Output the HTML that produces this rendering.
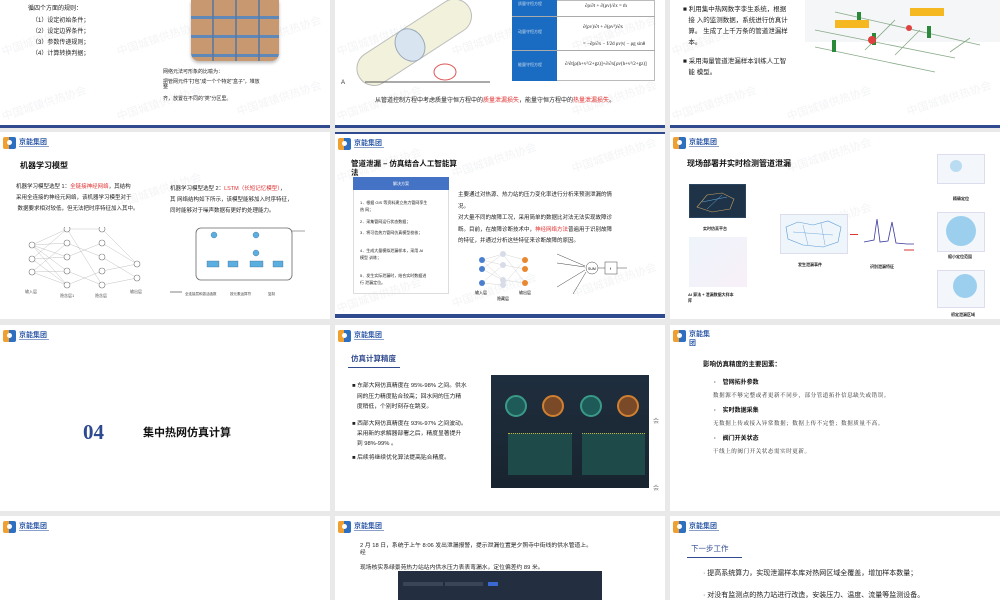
<!DOCTYPE html>
<html><head><meta charset="utf-8"><style>
*{margin:0;padding:0;box-sizing:border-box}
body{width:1000px;height:600px;background:#e9e9ea;position:relative;overflow:hidden;font-family:"Liberation Sans","Noto Sans CJK SC",sans-serif;color:#222}
.p{position:absolute;background:#fff;overflow:hidden}
.a{position:absolute;white-space:nowrap}
.bar{position:absolute;left:0;right:0;height:3px;background:#2f4a8f}
.t{font-size:6px;line-height:1}
.logo{position:absolute;width:46px;height:14px}
.logo .ic{position:absolute;left:0;top:0;width:13px;height:12px;background:linear-gradient(90deg,#f0a030 0 45%,#2e6fc0 45%);border-radius:2px}
.logo .ic:after{content:"";position:absolute;left:4px;top:3px;width:5px;height:5px;background:#fff;border-radius:50%}
.logo .n{position:absolute;left:16px;top:0;font-size:7px;color:#2e5aa8;font-weight:bold;white-space:nowrap}
.logo .s{position:absolute;left:16px;top:9px;width:30px;height:1px;background:#8aa0c8}
.wm{position:absolute;color:#f3f4f6;font-size:11px;transform:rotate(-18deg);white-space:nowrap}
.red{color:#e03030}
.h{font-weight:bold;color:#111}
.ul{border-bottom:1px solid #2f4a8f;color:#2f4a8f;font-weight:bold}
.dark{position:absolute;background:#1c2a3a}
</style></head><body>

<!-- ROW 1 -->
<div class="p" style="left:0;top:0;width:330px;height:128px">
 <div class="wm" style="left:0;top:30px">中国城镇供热协会</div><div class="wm" style="left:115px;top:30px">中国城镇供热协会</div><div class="wm" style="left:235px;top:25px">中国城镇供热协会</div>
 <div class="wm" style="left:0;top:95px">中国城镇供热协会</div><div class="wm" style="left:115px;top:95px">中国城镇供热协会</div><div class="wm" style="left:235px;top:90px">中国城镇供热协会</div>
 <div class="a t" style="left:28px;top:6px">循四个方面的规则：</div>
 <div class="a t" style="left:32px;top:18px">（1）设定初始条件；</div>
 <div class="a t" style="left:32px;top:29px">（2）设定边界条件；</div>
 <div class="a t" style="left:32px;top:40px">（3）参数传递规则；</div>
 <div class="a t" style="left:32px;top:51px">（4）计算转换判据；</div>
 <div class="a" style="left:191px;top:0;width:88px;height:61px;border-radius:0 0 8px 8px;background:repeating-linear-gradient(180deg,#c89870 0 16px,#5f87b8 16px 19px),#c89870;box-shadow:0 2px 3px #bbb"></div>
 <div class="a" style="left:191px;top:0;width:88px;height:61px;border-radius:0 0 8px 8px;background:repeating-linear-gradient(90deg,transparent 0 21px,rgba(90,120,160,.8) 21px 23px)"></div>
 <div class="a t" style="left:163px;top:70px;font-size:5px">网络元法可形象的比喻为：</div>
 <div class="a t" style="left:163px;top:80px;font-size:5px">把管网元件“打包”成一个个特定“盒子”，堆放<br>整</div>
 <div class="a t" style="left:163px;top:97px;font-size:5px">齐，放置在不同的“类”分区里。</div>
 <div class="bar" style="top:125px"></div>
</div>

<div class="p" style="left:335px;top:0;width:330px;height:128px">
 <div class="wm" style="left:0;top:30px">中国城镇供热协会</div><div class="wm" style="left:115px;top:30px">中国城镇供热协会</div><div class="wm" style="left:235px;top:25px">中国城镇供热协会</div><div class="wm" style="left:0;top:95px">中国城镇供热协会</div><div class="wm" style="left:235px;top:90px">中国城镇供热协会</div>
 <svg class="a" style="left:0;top:0" width="170" height="90">
  <g transform="rotate(-33 75 45)"><rect x="15" y="28" width="130" height="34" rx="17" fill="#f2f2dc" stroke="#bbb"/><ellipse cx="75" cy="45" rx="14" ry="17" fill="#d8e4f0" stroke="#9ab"/></g>
  <line x1="30" y1="82" x2="155" y2="82" stroke="#555" stroke-width="1"/>
  <ellipse cx="110" cy="72" rx="11" ry="8" fill="none" stroke="#d55"/>
  <text x="6" y="84" font-size="6" fill="#333">A</text>
 </svg>
 <div class="a" style="left:177px;top:0;width:143px;height:81px;border:1px solid #bbb"></div>
 <div class="a" style="left:177px;top:0;width:45px;height:81px;background:#1a6cc2"></div>
 <div class="a" style="left:177px;top:16px;width:143px;height:1px;background:#aaa"></div>
 <div class="a" style="left:177px;top:50px;width:143px;height:1px;background:#aaa"></div>
 <div class="a t" style="left:183px;top:2px;font-size:4px;color:#cde">质量守恒方程</div>
 <div class="a t" style="left:183px;top:30px;font-size:4px;color:#cde">动量守恒方程</div>
 <div class="a t" style="left:183px;top:63px;font-size:4px;color:#cde">能量守恒方程</div>
 <div class="a t" style="left:250px;top:4px;font-size:5px;font-family:'Liberation Serif',serif">∂ρ/∂t + ∂(ρv)/∂x = ṁ</div>
 <div class="a t" style="left:248px;top:25px;font-size:5px;font-family:'Liberation Serif',serif">∂(ρv)/∂t + ∂(ρv²)/∂x</div>
 <div class="a t" style="left:248px;top:42px;font-size:5px;font-family:'Liberation Serif',serif">= −∂p/∂x − f/2d ρv|v| − ρg sinθ</div>
 <div class="a t" style="left:230px;top:62px;font-size:5px;font-family:'Liberation Serif',serif">∂/∂t[ρ(h+v²/2+gz)]+∂/∂x[ρv(h+v²/2+gz)]</div>
 <div class="a t" style="left:40px;top:98px">从管道控制方程中考虑质量守恒方程中的<span class="red">质量泄漏损失</span>，能量守恒方程中的<span class="red">热量泄漏损失</span>。</div>
 <div class="bar" style="top:125px"></div>
</div>

<div class="p" style="left:670px;top:0;width:330px;height:128px">
 <div class="wm" style="left:0;top:30px">中国城镇供热协会</div><div class="wm" style="left:115px;top:95px">中国城镇供热协会</div><div class="wm" style="left:235px;top:90px">中国城镇供热协会</div><div class="wm" style="left:0;top:95px">中国城镇供热协会</div>
 <div class="a" style="left:13px;top:4px;font-size:6.5px;line-height:11px">■ 利用集中热网数字孪生系统，根据<br>&nbsp;&nbsp;&nbsp;接 入的监测数据，系统进行仿真计<br>&nbsp;&nbsp;&nbsp;算。 生成了上千万条的管道泄漏样<br>&nbsp;&nbsp;&nbsp;本。</div>
 <div class="a" style="left:13px;top:56px;font-size:6.5px;line-height:11px">■ 采用海量管道泄漏样本训练人工智<br>&nbsp;&nbsp;&nbsp;能 模型。</div>
 <svg class="a" style="left:135px;top:0" width="195" height="80">
  <rect x="0" y="0" width="195" height="42" fill="#f4f6f8"/>
  <g stroke="#8a8" stroke-width="0.8" fill="none"><line x1="30" y1="12" x2="175" y2="45"/><line x1="10" y1="30" x2="150" y2="58"/><line x1="10" y1="47" x2="130" y2="72"/><line x1="60" y1="50" x2="90" y2="20"/><line x1="90" y1="55" x2="115" y2="30"/><line x1="145" y1="52" x2="165" y2="38"/></g>
  <rect x="52" y="12" width="4" height="12" fill="#2a8a3a"/><rect x="27" y="40" width="4" height="12" fill="#2a8a3a"/><rect x="67" y="33" width="4" height="12" fill="#2a8a3a"/><rect x="122" y="26" width="4" height="12" fill="#2a8a3a"/>
  <circle cx="67" cy="40" r="4" fill="#e04040"/><circle cx="104" cy="28" r="3" fill="#e04040"/>
  <rect x="30" y="20" width="34" height="8" fill="#f5b820"/><rect x="105" y="8" width="34" height="8" fill="#f5b820"/>
 </svg>
 <div class="bar" style="top:125px"></div>
</div>

<!-- ROW 2 -->
<div class="p" style="left:0;top:132px;width:330px;height:187px">
 <div class="logo" style="left:3px;top:5px"><div class="ic"></div><div class="n">京能集团</div><div class="s"></div></div>
 <div class="wm" style="left:115px;top:50px">中国城镇供热协会</div>
 <div class="a h" style="left:20px;top:28px;font-size:8px">机器学习模型</div>
 <div class="a" style="left:16px;top:50px;font-size:5.5px;line-height:11px">机器学习模型选型 1：<span class="red">全链接神经网络</span>，其结构<br>采用全连接的神经元网络，该机器学习模型对于<br>&nbsp;数据要求相对较低，但无法把时序特征加入其中。</div>
 <div class="a" style="left:170px;top:52px;font-size:5.5px;line-height:11px">机器学习模型选型 2：<span class="red">LSTM（长短记忆模型）</span>，<br>其 网络结构如下所示，该模型能够加入时序特征，<br>同时能够对于噪声数据有更好的处理能力。</div>
 <svg class="a" style="left:25px;top:95px" width="125" height="75">
  <g stroke="#999" stroke-width="0.3">
   <path d="M7 18L42 2M7 18L42 16M7 18L42 30M7 18L42 44M7 18L42 58M7 32L42 2M7 32L42 30M7 32L42 58M7 45L42 16M7 45L42 44M7 45L42 58M42 2L77 2M42 16L77 30M42 30L77 16M42 44L77 58M42 58L77 44M42 2L77 58M77 2L112 37M77 16L112 37M77 30L112 51M77 44L112 37M77 58L112 51"/>
  </g>
  <g fill="#fff" stroke="#777" stroke-width="0.6"><circle cx="7" cy="18" r="3"/><circle cx="7" cy="32" r="3"/><circle cx="7" cy="45" r="3"/>
  <circle cx="42" cy="2" r="3"/><circle cx="42" cy="16" r="3"/><circle cx="42" cy="30" r="3"/><circle cx="42" cy="44" r="3"/><circle cx="42" cy="58" r="3"/>
  <circle cx="77" cy="2" r="3"/><circle cx="77" cy="16" r="3"/><circle cx="77" cy="30" r="3"/><circle cx="77" cy="44" r="3"/><circle cx="77" cy="58" r="3"/>
  <circle cx="112" cy="37" r="3"/><circle cx="112" cy="51" r="3"/></g>
  <text x="0" y="66" font-size="4" fill="#555">输入层</text><text x="35" y="70" font-size="4" fill="#555">隐含层1</text><text x="70" y="70" font-size="4" fill="#555">隐含层</text><text x="105" y="66" font-size="4" fill="#555">输出层</text>
 </svg>
 <svg class="a" style="left:170px;top:93px" width="140" height="75">
  <rect x="26" y="3" width="96" height="52" rx="5" fill="none" stroke="#666" stroke-width="0.8"/>
  <line x1="122" y1="6" x2="135" y2="6" stroke="#666" stroke-width="0.6"/>
  <g fill="#5aaee0" stroke="#357"><rect x="37" y="36" width="12" height="6" stroke-width="0.3"/><rect x="58" y="36" width="10" height="6" stroke-width="0.3"/><rect x="80" y="36" width="13" height="6" stroke-width="0.3"/><rect x="103" y="36" width="10" height="6" stroke-width="0.3"/><circle cx="44" cy="10" r="3" stroke-width="0.3"/><circle cx="86" cy="10" r="3" stroke-width="0.3"/><circle cx="86" cy="28" r="3" stroke-width="0.3"/></g>
  <line x1="0" y1="67" x2="12" y2="67" stroke="#333" stroke-width="0.6"/>
  <text x="15" y="70" font-size="3.5" fill="#444">全连接层和激活函数</text><text x="60" y="70" font-size="3.5" fill="#444">按元素运算符</text><text x="98" y="70" font-size="3.5" fill="#444">复制</text>
 </svg>
</div>

<div class="p" style="left:335px;top:132px;width:330px;height:187px">
 <div class="a" style="left:0;right:0;top:0;height:2px;background:#2f4a8f"></div>
 <div class="wm" style="left:0;top:25px">中国城镇供热协会</div><div class="wm" style="left:115px;top:20px">中国城镇供热协会</div><div class="wm" style="left:235px;top:15px">中国城镇供热协会</div><div class="wm" style="left:0;top:155px">中国城镇供热协会</div><div class="wm" style="left:115px;top:150px">中国城镇供热协会</div><div class="wm" style="left:235px;top:140px">中国城镇供热协会</div>
 <div class="logo" style="left:3px;top:6px"><div class="ic"></div><div class="n">京能集团</div><div class="s"></div></div>
 <div class="a h" style="left:16px;top:27px;font-size:7.5px;line-height:9px">管道泄漏 – 仿真结合人工智能算<br>法</div>
 <div class="a" style="left:18px;top:45px;width:96px;height:117px;border:1px solid #ddd"></div>
 <div class="a" style="left:18px;top:45px;width:96px;height:13px;background:#4472c4;color:#fff;font-size:4px;text-align:center;line-height:13px">解决方案</div>
 <div class="a" style="left:25px;top:67px;font-size:4px;line-height:7px">1．根据 GIS 等资料建立热力管网孪生<br>热 网；</div>
 <div class="a" style="left:25px;top:87px;font-size:4px">2．采集管网运行状态数据；</div>
 <div class="a" style="left:25px;top:98px;font-size:4px">3．将可信热力管网仿真模型校核；</div>
 <div class="a" style="left:25px;top:115px;font-size:4px;line-height:7px">4．生成大量模拟泄漏样本，采用 AI<br>模型 训练；</div>
 <div class="a" style="left:25px;top:140px;font-size:4px;line-height:7px">5．发生实际泄漏时，结合实时数据进<br>行 泄漏定位。</div>
 <div class="a" style="left:123px;top:58px;font-size:5.5px;line-height:11.5px">主要通过对热源、热力站的压力变化率进行分析来预测泄漏的情<br>况。<br>对大量不同的故障工况，采用简单的数据比对法无法实现故障诊<br>断。目前，在故障诊断技术中，<span class="red">神经网络方法</span>普遍用于识别故障<br>的特征，并通过分析这些特征来诊断故障的原因。</div>
 <svg class="a" style="left:140px;top:118px" width="70" height="52">
  <g stroke="#ccc" stroke-width="0.4"><path d="M7 10L28 4M7 10L28 15M7 10L28 30M7 19L28 4M7 19L28 30M7 33L28 15M7 33L28 35M28 4L50 10M28 15L50 19M28 30L50 33M28 35L50 10M28 4L50 33"/></g>
  <g fill="#4a7fd0"><circle cx="7" cy="10" r="3"/><circle cx="7" cy="19" r="3"/><circle cx="7" cy="33" r="3"/></g>
  <g fill="#d8dce8"><circle cx="28" cy="4" r="3"/><circle cx="28" cy="15" r="3"/><circle cx="28" cy="30" r="3"/><circle cx="28" cy="35" r="3"/></g>
  <g fill="#e88830"><circle cx="50" cy="10" r="3"/><circle cx="50" cy="19" r="3"/><circle cx="50" cy="33" r="3"/></g>
  <text x="0" y="44" font-size="4">输入层</text><text x="22" y="50" font-size="4">隐藏层</text><text x="44" y="44" font-size="4">输出层</text>
 </svg>
 <svg class="a" style="left:220px;top:118px" width="80" height="45">
  <g stroke="#444" stroke-width="0.5" fill="none"><line x1="2" y1="4" x2="30" y2="16"/><line x1="2" y1="13" x2="30" y2="17"/><line x1="2" y1="37" x2="30" y2="20"/><line x1="18" y1="44" x2="31" y2="22"/><circle cx="37" cy="18" r="6" fill="#fff"/><line x1="43" y1="18" x2="50" y2="18"/><rect x="50" y="12" width="12" height="12"/><line x1="62" y1="18" x2="72" y2="18"/></g>
  <text x="33" y="20" font-size="3.5">SUM</text><text x="55" y="20" font-size="4">f</text>
 </svg>
 <div class="bar" style="top:182px;height:4px"></div>
</div>

<div class="p" style="left:670px;top:132px;width:330px;height:187px">
 <div class="wm" style="left:115px;top:15px">中国城镇供热协会</div><div class="wm" style="left:115px;top:80px">中国城镇供热协会</div>
 <div class="logo" style="left:3px;top:5px"><div class="ic"></div><div class="n">京能集团</div><div class="s"></div></div>
 <div class="a h" style="left:17px;top:26px;font-size:8px">现场部署并实时检测管道泄漏</div>
 <div class="a" style="left:19px;top:52px;width:57px;height:34px;background:#1e3348;border:1px solid #2a4560"></div>
 <svg class="a" style="left:22px;top:55px" width="50" height="28"><path d="M5 20L15 8L30 6L42 12L38 22L20 25Z" fill="none" stroke="#c8a060" stroke-width="0.6"/><path d="M10 15L35 10M15 22L30 8" stroke="#6ad" stroke-width="0.5"/></svg>
 <div class="a" style="left:33px;top:94px;font-size:4px;font-weight:bold">实时仿真平台</div>
 <div class="a" style="left:19px;top:105px;width:58px;height:50px;background:linear-gradient(135deg,#eef4fb,#f8f0f8)"></div>
 <div class="a" style="left:18px;top:160px;font-size:4px;font-weight:bold;line-height:6px">AI 算法 + 泄漏数据大样本<br>库</div>
 <div class="a" style="left:110px;top:82px;width:68px;height:40px;background:#eef5fb;border:1px solid #dde"></div>
 <svg class="a" style="left:113px;top:85px" width="62" height="35"><path d="M3 10L15 5L30 8L45 4L58 10L55 25L40 30L20 28L5 22Z" fill="none" stroke="#5a9bd5" stroke-width="0.6"/><path d="M10 15L50 18M20 8L25 28M38 6L42 28" stroke="#5a9bd5" stroke-width="0.4"/></svg>
 <div class="a" style="left:128px;top:130px;font-size:4px;font-weight:bold">发生泄漏事件</div>
 <div class="a" style="left:180px;top:102px;width:8px;height:1px;background:#d33"></div>
 <svg class="a" style="left:192px;top:82px" width="55" height="42"><path d="M2 28L12 26L15 5L18 28L26 27L30 8L34 29L45 30L52 30" fill="none" stroke="#3a3aa0" stroke-width="0.8"/><line x1="42" y1="36" x2="52" y2="36" stroke="#d33"/></svg>
 <div class="a" style="left:200px;top:132px;font-size:4px;font-weight:bold">识别泄漏特征</div>
 <div class="a" style="left:267px;top:22px;width:48px;height:30px;background:#f3f7fb;border:1px solid #dde"></div>
 <div class="a" style="left:280px;top:28px;width:12px;height:12px;border-radius:50%;background:#b9dcf2"></div>
 <div class="a" style="left:283px;top:64px;font-size:4px;font-weight:bold">精确定位</div>
 <div class="a" style="left:267px;top:80px;width:48px;height:40px;background:#f3f7fb;border:1px solid #dde"></div>
 <div class="a" style="left:276px;top:84px;width:30px;height:30px;border-radius:50%;background:#9ccfee"></div>
 <div class="a" style="left:278px;top:122px;font-size:4px;font-weight:bold">缩小定位范围</div>
 <div class="a" style="left:267px;top:138px;width:48px;height:38px;background:#f3f7fb;border:1px solid #dde"></div>
 <div class="a" style="left:283px;top:142px;width:24px;height:24px;border-radius:50%;background:#9ccfee"></div>
 <div class="a" style="left:281px;top:180px;font-size:4px;font-weight:bold">初定泄漏区域</div>
</div>

<!-- ROW 3 -->
<div class="p" style="left:0;top:325px;width:330px;height:186px">
 <div class="logo" style="left:3px;top:5px"><div class="ic"></div><div class="n">京能集团</div><div class="s"></div></div>
 <div class="a" style="left:83px;top:95px;font-family:'Liberation Serif',serif;font-size:21px;font-weight:bold;color:#2f4a8f">04</div>
 <div class="a h" style="left:143px;top:99px;font-size:11px">集中热网仿真计算</div>
</div>

<div class="p" style="left:335px;top:325px;width:330px;height:186px">
 <div class="logo" style="left:3px;top:5px"><div class="ic"></div><div class="n">京能集团</div><div class="s"></div></div>
 <div class="a ul" style="left:13px;top:28px;font-size:7.5px;padding:0 4px 3px 3px">仿真计算精度</div>
 <div class="a" style="left:17px;top:56px;font-size:5.8px;line-height:10.5px">■ 东部大网仿真精度在 95%-98% 之间。供水<br>&nbsp;&nbsp;&nbsp;网的压力精度贴合较高；回水网的压力精<br>&nbsp;&nbsp;&nbsp;度稍低，个别时刻存在跳变。</div>
 <div class="a" style="left:17px;top:94px;font-size:5.8px;line-height:10px">■ 西部大网仿真精度在 93%-97% 之间波动。<br>&nbsp;&nbsp;&nbsp;采用新的求解器部署之后，精度显著提升<br>&nbsp;&nbsp;&nbsp;到 98%-99% 。</div>
 <div class="a" style="left:17px;top:127px;font-size:5.8px">■ 后续将继续优化算法提高贴合精度。</div>
 <div class="dark" style="left:156px;top:50px;width:158px;height:113px;background:linear-gradient(180deg,#1f2e3e,#18242f)"></div>
 <div class="a" style="left:170px;top:70px;width:22px;height:22px;border-radius:50%;border:2px solid #3a9a88;background:#1e5a58"></div>
 <div class="a" style="left:207px;top:70px;width:22px;height:22px;border-radius:50%;border:2px solid #d08030;background:#7a4a28"></div>
 <div class="a" style="left:245px;top:70px;width:22px;height:22px;border-radius:50%;border:2px solid #3a9a88;background:#1e5a58"></div>
 <div class="a" style="left:282px;top:70px;width:22px;height:22px;border-radius:50%;border:2px solid #d08030;background:#7a4a28"></div>
 <div class="a" style="left:173px;top:108px;width:64px;height:42px;background:#1e4a4a;border-top:1px dotted #c8b040"></div>
 <div class="a" style="left:247px;top:108px;width:63px;height:42px;background:#1e4a4a;border-top:1px dotted #c8b040"></div>
 <div class="a" style="left:318px;top:91px;font-size:6px;color:#888">会</div>
 <div class="a" style="left:318px;top:158px;font-size:6px;color:#888">会</div>
</div>

<div class="p" style="left:670px;top:325px;width:330px;height:186px">
 <div class="logo" style="left:3px;top:5px;height:24px"><div class="ic"></div><div class="n" style="line-height:9px">京能集<br>团</div></div>
 <div class="a h" style="left:33px;top:33px;font-size:6.5px">影响仿真精度的主要因素：</div>
 <div class="a h" style="left:44px;top:52px;font-size:6px">·&nbsp;&nbsp;&nbsp;&nbsp;管网拓扑参数</div>
 <div class="a" style="left:43px;top:66px;font-size:5.5px;font-family:'Liberation Serif','Noto Serif CJK SC',serif;letter-spacing:0.6px">数据源不够完整或者更新不同步，部分管道拓扑信息缺失或错误。</div>
 <div class="a h" style="left:44px;top:80px;font-size:6px">·&nbsp;&nbsp;&nbsp;&nbsp;实时数据采集</div>
 <div class="a" style="left:43px;top:94px;font-size:5.5px;font-family:'Liberation Serif','Noto Serif CJK SC',serif;letter-spacing:0.6px">无数据上传或接入异常数据；数据上传不完整；数据质量不高。</div>
 <div class="a h" style="left:44px;top:108px;font-size:6px">·&nbsp;&nbsp;&nbsp;&nbsp;阀门开关状态</div>
 <div class="a" style="left:43px;top:122px;font-size:5.5px;font-family:'Liberation Serif','Noto Serif CJK SC',serif;letter-spacing:0.6px">干线上的阀门开关状态需实时更新。</div>
</div>

<!-- ROW 4 -->
<div class="p" style="left:0;top:516px;width:330px;height:84px">
 <div class="logo" style="left:3px;top:5px"><div class="ic"></div><div class="n">京能集团</div><div class="s"></div></div>
</div>
<div class="p" style="left:335px;top:516px;width:330px;height:84px">
 <div class="logo" style="left:3px;top:5px"><div class="ic"></div><div class="n">京能集团</div><div class="s"></div></div>
 <div class="a" style="left:25px;top:27px;font-size:5.8px;line-height:7px">2 月 18 日，系统于上午 8:06 发出泄漏报警，提示泄漏位置是夕照寺中街线的供水管道上。<br>经</div>
 <div class="a" style="left:25px;top:46px;font-size:5.8px">现场核实系绿景苑热力站站内供水压力表表弯漏水，定位偏差约 89 米。</div>
 <div class="dark" style="left:63px;top:55px;width:204px;height:29px;background:#232f40"></div>
 <div class="a" style="left:68px;top:66px;width:40px;height:4px;background:#3a4658"></div>
 <div class="a" style="left:110px;top:66px;width:38px;height:4px;background:#3a4658"></div>
 <div class="a" style="left:153px;top:66px;width:10px;height:4px;background:#3a6ad0"></div>
</div>
<div class="p" style="left:670px;top:516px;width:330px;height:84px">
 <div class="logo" style="left:3px;top:5px"><div class="ic"></div><div class="n">京能集团</div><div class="s"></div></div>
 <div class="a ul" style="left:17px;top:27px;font-size:7.5px;padding:0 13px 3px 4px;font-weight:normal">下一步工作</div>
 <div class="a" style="left:33px;top:52px;font-size:7px">· 提高系统算力，实现泄漏样本库对热网区域全覆盖，增加样本数量；</div>
 <div class="a" style="left:33px;top:74px;font-size:7px">· 对没有监测点的热力站进行改造，安装压力、温度、流量等监测设备。</div>
</div>
</body></html>
